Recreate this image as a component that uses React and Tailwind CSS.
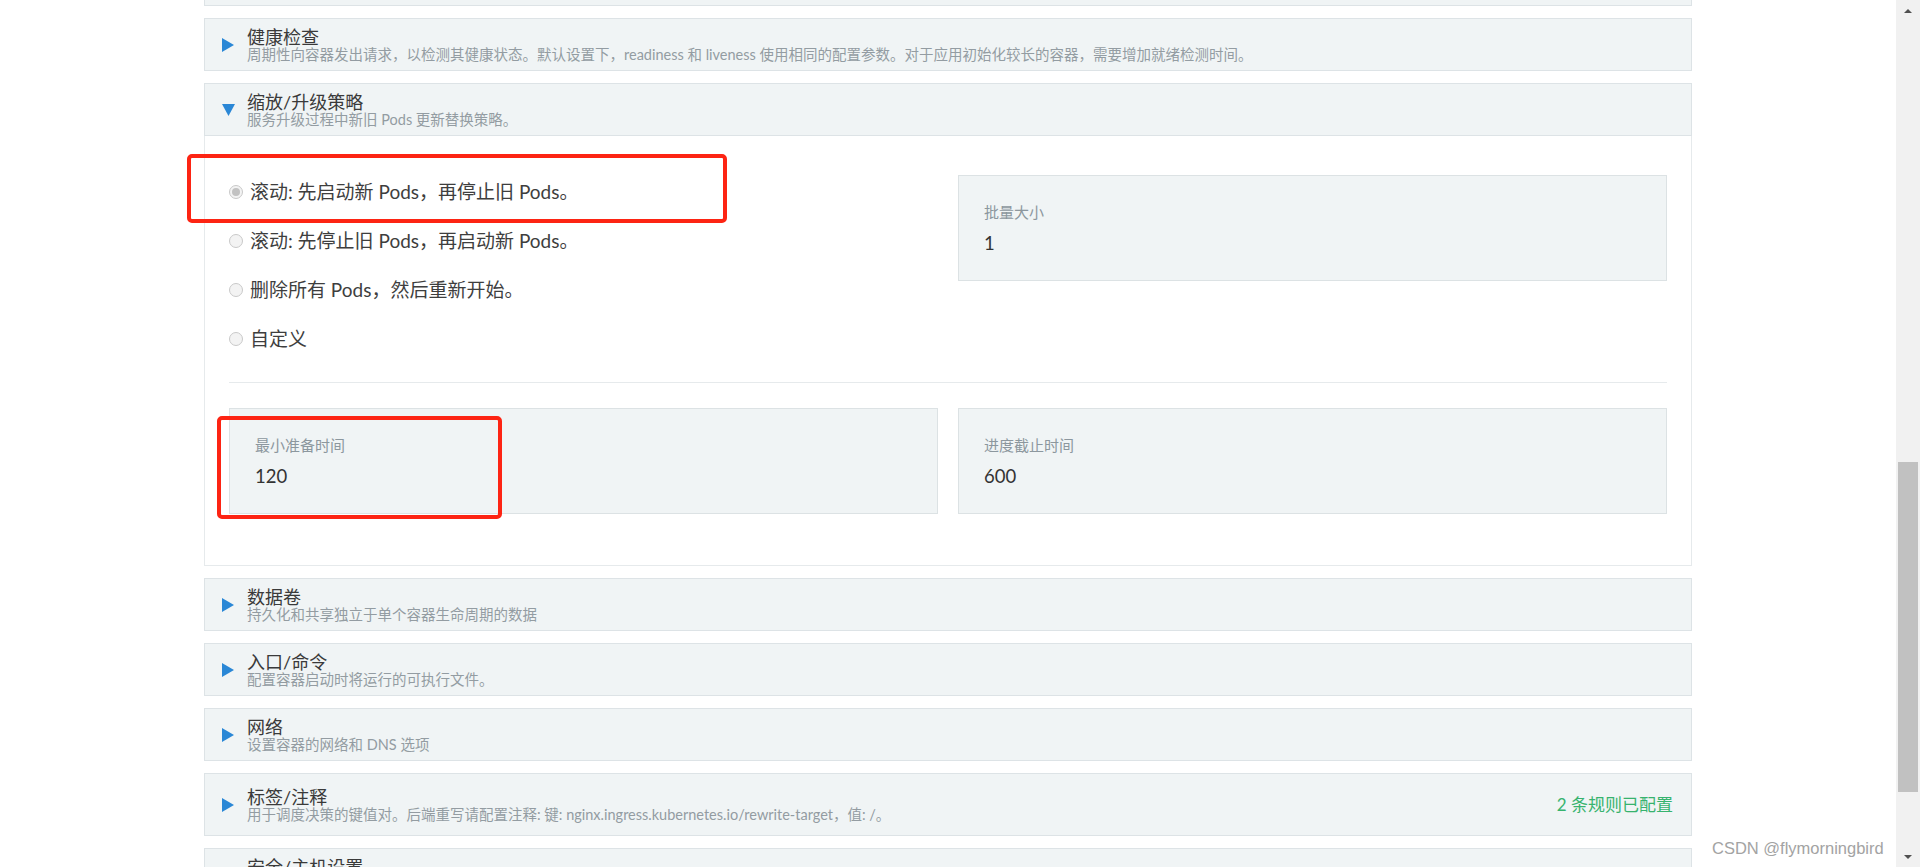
import React from 'react';

const panels = [
  { title: '数据卷', desc: '持久化和共享独立于单个容器生命周期的数据' },
  { title: '入口/命令', desc: '配置容器启动时将运行的可执行文件。' },
  { title: '网络', desc: '设置容器的网络和 DNS 选项' },
  {
    title: '标签/注释',
    desc: '用于调度决策的键值对。后端重写请配置注释: 键: nginx.ingress.kubernetes.io/rewrite-target，值: /。',
    right: '2 条规则已配置',
    tall: true,
  },
  { title: '安全/主机设置', desc: '配置容器的安全和主机相关选项。' },
];

const radios = [
  { label: '滚动: 先启动新 Pods，再停止旧 Pods。', checked: true },
  { label: '滚动: 先停止旧 Pods，再启动新 Pods。' },
  { label: '删除所有 Pods，然后重新开始。' },
  { label: '自定义' },
];

const Arrow = ({ open }) => (
  <div className="flex w-[13px] shrink-0 items-center">
    {open ? (
      <svg width="13" height="12" viewBox="0 0 13 12">
        <polygon points="0,0 13,0 6.5,12" fill="#2a87d6" />
      </svg>
    ) : (
      <svg width="12" height="14" viewBox="0 0 12 14">
        <polygon points="0,0 12,7 0,14" fill="#2a87d6" />
      </svg>
    )}
  </div>
);

const Header = ({ title, desc, open, right, tall }) => (
  <div
    className={`flex shrink-0 items-center border border-[#dde3e6] bg-[#f0f4f5] pl-[17px] pr-[18px] ${
      tall ? 'h-[63px]' : 'h-[53px]'
    }`}
  >
    <Arrow open={open} />
    <div className="ml-[12px] flex flex-col">
      <div className="text-[18px] leading-[20px] text-[#3a3a3a]">{title}</div>
      <div className="whitespace-nowrap text-[14.5px] leading-[16px] text-[#939ca2]">{desc}</div>
    </div>
    {right && <div className="ml-auto text-[17px] text-[#37b36e]">{right}</div>}
  </div>
);

const Box = ({ label, value }) => (
  <div className="h-[106px] border border-[#dce2e4] bg-[#f0f4f5] px-[25px] pt-[26px]">
    <div className="text-[15px] leading-[20px] text-[#8c979e]">{label}</div>
    <div className="mt-[9px] text-[18.5px] leading-[24px] text-[#333333]">{value}</div>
  </div>
);

const Radio = ({ label, checked }) => (
  <div className="flex h-[34px] items-center">
    <div className="flex h-[14px] w-[14px] shrink-0 items-center justify-center rounded-full border border-[#c9c9c9] bg-[#f3f3f3]">
      {checked && <div className="h-[8px] w-[8px] rounded-full bg-[#c2c2c2]" />}
    </div>
    <span className="ml-[7px] text-[19px] text-[#3e3e3e]">{label}</span>
  </div>
);

const Scrollbar = () => (
  <div className="flex w-[24px] shrink-0 flex-col bg-[#f1f1f1]">
    <div className="flex h-[21px] items-center justify-center">
      <svg width="8" height="4" viewBox="0 0 8 4">
        <polygon points="0,4 8,4 4,0" fill="#505050" />
      </svg>
    </div>
    <div className="flex-1">
      <div className="mx-[2px] mt-[441px] h-[330px] bg-[#c1c1c1]" />
    </div>
    <div className="flex h-[21px] items-center justify-center">
      <svg width="8" height="4" viewBox="0 0 8 4">
        <polygon points="0,0 8,0 4,4" fill="#505050" />
      </svg>
    </div>
  </div>
);

export default function App() {
  return (
    <div className="flex h-[867px] w-[1920px] overflow-hidden bg-white font-['Lato','Noto_Sans_CJK_SC',sans-serif]">
      <main className="relative flex-1 overflow-hidden">
        <div className="ml-[204px] flex w-[1488px] flex-col gap-[12px]">
          {/* tail of the panel above */}
          <div className="h-[6px] border-x border-b border-[#dde3e6] bg-[#f0f4f5]" />

          <Header
            title="健康检查"
            desc="周期性向容器发出请求，以检测其健康状态。默认设置下，readiness 和 liveness 使用相同的配置参数。对于应用初始化较长的容器，需要增加就绪检测时间。"
          />

          <div className="flex flex-col">
            <Header title="缩放/升级策略" desc="服务升级过程中新旧 Pods 更新替换策略。" open />
            <div className="border-x border-b border-[#e6eaec] px-[24px] pb-[51px] pt-[39px]">
              <div className="grid grid-cols-2 gap-x-[20px]">
                <div className="flex flex-col gap-[15px]">
                  {radios.map((r) => (
                    <Radio key={r.label} label={r.label} checked={r.checked} />
                  ))}
                </div>
                <div>
                  <Box label="批量大小" value="1" />
                </div>
              </div>
              <div className="mt-[26px] h-px bg-[#e6eaec]" />
              <div className="mt-[25px] grid grid-cols-2 gap-x-[20px]">
                <Box label="最小准备时间" value="120" />
                <Box label="进度截止时间" value="600" />
              </div>
            </div>
          </div>

          {panels.map((p) => (
            <Header key={p.title} {...p} />
          ))}
        </div>

        {/* red annotation boxes */}
        <div className="absolute left-[187px] top-[154px] h-[69px] w-[540px] rounded-[5px] border-[4px] border-[#fd2413]" />
        <div className="absolute left-[217px] top-[416px] h-[103px] w-[285px] rounded-[5px] border-[4px] border-[#fd2413]" />

        <div className="absolute left-[1712px] top-[839px] font-['Liberation_Sans',sans-serif] text-[16.5px] leading-[18px] text-[#a3a3a3]">
          CSDN @flymorningbird
        </div>
      </main>
      <Scrollbar />
    </div>
  );
}
